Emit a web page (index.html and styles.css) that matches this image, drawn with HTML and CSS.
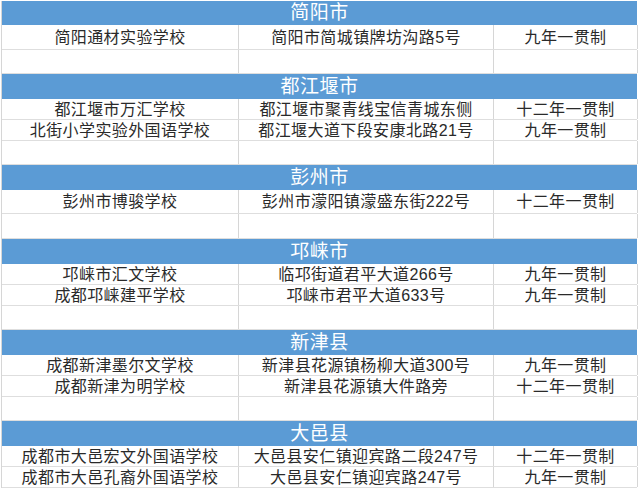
FILE: index.html
```html
<!DOCTYPE html>
<html lang="zh-CN">
<head>
<meta charset="utf-8">
<link rel="stylesheet" href="styles.css">
</head>
<body>
<div class="sheet">
  <div class="head first">简阳市</div>
  <div class="row tall1"><div class="c">简阳通材实验学校</div><div class="c">简阳市简城镇牌坊沟路5号</div><div class="c">九年一贯制</div></div>
  <div class="row tall"><div class="c"></div><div class="c"></div><div class="c"></div></div>

  <div class="head">都江堰市</div>
  <div class="row"><div class="c">都江堰市万汇学校</div><div class="c">都江堰市聚青线宝信青城东侧</div><div class="c">十二年一贯制</div></div>
  <div class="row"><div class="c">北街小学实验外国语学校</div><div class="c">都江堰大道下段安康北路21号</div><div class="c">九年一贯制</div></div>
  <div class="row tall"><div class="c"></div><div class="c"></div><div class="c"></div></div>

  <div class="head">彭州市</div>
  <div class="row tall"><div class="c">彭州市博骏学校</div><div class="c">彭州市濛阳镇濛盛东街222号</div><div class="c">十二年一贯制</div></div>
  <div class="row tall1"><div class="c"></div><div class="c"></div><div class="c"></div></div>

  <div class="head">邛崃市</div>
  <div class="row"><div class="c">邛崃市汇文学校</div><div class="c">临邛街道君平大道266号</div><div class="c">九年一贯制</div></div>
  <div class="row"><div class="c">成都邛崃建平学校</div><div class="c">邛崃市君平大道633号</div><div class="c">九年一贯制</div></div>
  <div class="row tall"><div class="c"></div><div class="c"></div><div class="c"></div></div>

  <div class="head">新津县</div>
  <div class="row"><div class="c">成都新津墨尔文学校</div><div class="c">新津县花源镇杨柳大道300号</div><div class="c">九年一贯制</div></div>
  <div class="row"><div class="c">成都新津为明学校</div><div class="c">新津县花源镇大件路旁</div><div class="c">十二年一贯制</div></div>
  <div class="row tall"><div class="c"></div><div class="c"></div><div class="c"></div></div>

  <div class="head">大邑县</div>
  <div class="row"><div class="c">成都市大邑宏文外国语学校</div><div class="c">大邑县安仁镇迎宾路二段247号</div><div class="c">十二年一贯制</div></div>
  <div class="row"><div class="c">成都市大邑孔裔外国语学校</div><div class="c">大邑县安仁镇迎宾路247号</div><div class="c">九年一贯制</div></div>
</div>
</body>
</html>
```

FILE: styles.css
```css
* { box-sizing: border-box; }
html, body { margin: 0; padding: 0; background: #fff; }
body {
  font-family: "Liberation Sans", "Noto Sans CJK SC", sans-serif;
  color: #2a2a2a;
  overflow: hidden;
}
.sheet {
  margin: 1px 0 0 1px;
  width: 636px;
  border-left: 1px solid #d6d6d6;
}
.head {
  height: 25px;
  background: #5b9bd5;
  color: #fff;
  font-size: 19px;
  line-height: 20px;
  letter-spacing: 0.5px;
  display: flex;
  align-items: center;
  justify-content: center;
}
.head.first { height: 24px; }
.row {
  display: grid;
  grid-template-columns: 237px 255px 144px;
  height: 21px;
  border-bottom: 1px solid #dedede;
}
.row.tall { height: 24px; }
.row.tall1 { height: 25px; }
.c {
  border-right: 1px solid #d6d6d6;
  font-size: 16px;
  line-height: 16px;
  white-space: nowrap;
  letter-spacing: 0.4px;
  display: flex;
  align-items: center;
  justify-content: center;
  padding-top: 1px;
}
```
